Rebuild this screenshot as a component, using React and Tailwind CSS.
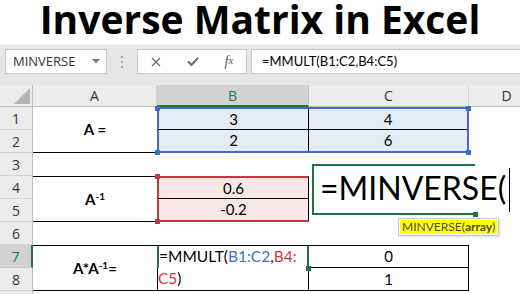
import React from "react";

const rows = [1, 2, 3, 4, 5, 6, 7, 8, 9];

function FormulaBar() {
  return (
    <div className="h-[40px] bg-[#e6e6e6] flex items-start pt-[4px] pl-[5px] overflow-hidden font-['Open_Sans',sans-serif]">
      <div className="w-[102px] h-[25px] shrink-0 bg-white border border-[#c6c6c6] flex items-center pl-[7px] pr-[6px] text-[13px] text-[#333]">
        <span className="flex-1">MINVERSE</span>
        <svg width="8" height="5" viewBox="0 0 8 5">
          <path d="M0 0h8L4 4.5z" fill="#7a7a7a" />
        </svg>
      </div>
      <div className="w-[30px] h-[25px] shrink-0 flex flex-col items-center justify-center gap-[3px]">
        <span className="w-[2px] h-[2px] bg-[#a6a6a6]" />
        <span className="w-[2px] h-[2px] bg-[#a6a6a6]" />
        <span className="w-[2px] h-[2px] bg-[#a6a6a6]" />
      </div>
      <div className="w-[110px] h-[25px] shrink-0 bg-white border border-[#c6c6c6] flex items-center">
        <span className="w-[36px] flex justify-center">
          <svg width="10" height="10" viewBox="0 0 10 10">
            <path d="M1 1l8 8M9 1l-8 8" stroke="#6b6b6b" strokeWidth="1.3" />
          </svg>
        </span>
        <span className="w-[38px] flex justify-center">
          <svg width="12" height="9" viewBox="0 0 12 9">
            <path d="M1 4.5l3.5 3.5L11 1" stroke="#6b6b6b" strokeWidth="2" fill="none" />
          </svg>
        </span>
        <span className="w-[34px] flex justify-center font-['Liberation_Serif',serif] italic text-[14px] text-[#555] leading-none">
          f<span className="text-[11px]">x</span>
        </span>
      </div>
      <div className="ml-[4px] w-[280px] shrink-0 h-[25px] bg-white border border-[#c6c6c6] pl-[10px] flex items-center font-['Lato',sans-serif] text-[13px] text-black">
        =MMULT(B1:C2,B4:C5)
      </div>
    </div>
  );
}

function RowHeads() {
  return (
    <div className="w-[33px] shrink-0 flex flex-col font-['Open_Sans',sans-serif] text-[14px] text-[#333]">
      <div className="relative h-[22px] shrink-0 bg-[#ececec] border-r border-b border-[#bdbdbd]">
        <svg className="absolute right-[2px] bottom-[2px]" width="16" height="16" viewBox="0 0 16 16">
          <path d="M16 0V16H0z" fill="#b5b5b5" />
        </svg>
      </div>
      {rows.map((n) =>
        n === 7 ? (
          <div
            key={n}
            className="h-[23px] shrink-0 bg-[#d2d2d2] border-b border-[#c6c6c6] border-r-2 border-r-[#217346] text-[#217346] flex items-center justify-center"
          >
            {n}
          </div>
        ) : (
          <div
            key={n}
            className="h-[23px] shrink-0 bg-[#ececec] border-b border-[#d4d4d4] border-r border-r-[#bdbdbd] flex items-center justify-center"
          >
            {n < 9 ? n : null}
          </div>
        )
      )}
    </div>
  );
}

function Sheet() {
  const head =
    "row-start-1 bg-[#ececec] border-r border-[#d4d4d4] border-b border-b-[#bdbdbd] flex items-center justify-center font-['Open_Sans',sans-serif] text-[14px] text-[#333]";
  const label = "flex items-center justify-center font-bold text-[15px]";
  const num = "flex items-center justify-center";

  return (
    <div className="relative flex h-[209px] font-['Lato',sans-serif] text-[15px] text-black">
      <RowHeads />
      <div className="grid shrink-0 grid-cols-[124px_152px_160px_76px] grid-rows-[22px_repeat(9,23px)]">
        <div className={`col-start-1 ${head}`}>A</div>
        <div className="col-start-2 row-start-1 bg-[#d2d2d2] border-r border-[#c6c6c6] border-b-2 border-b-[#217346] flex items-center justify-center font-['Open_Sans',sans-serif] text-[14px] text-[#217346]">
          B
        </div>
        <div className={`col-start-3 ${head}`}>C</div>
        <div className={`col-start-4 ${head}`}>D</div>

        <div className={`col-start-1 row-start-2 row-span-2 border-b border-black ${label}`}>A =</div>

        <div className="relative col-start-2 col-span-2 row-start-2 row-span-2 grid grid-cols-[150px_1fr] grid-rows-2 border-2 border-[#3e6fc2] bg-[#e4ecf7]">
          <div className={`border-r border-b border-black ${num}`}>3</div>
          <div className={`border-b border-black ${num}`}>4</div>
          <div className={`border-r border-black ${num}`}>2</div>
          <div className={num}>6</div>
          <span className="absolute -left-[4px] -top-[3px] w-[5px] h-[5px] bg-[#3e6fc2]" />
          <span className="absolute -left-[4px] -bottom-[4px] w-[5px] h-[5px] bg-[#3e6fc2]" />
          <span className="absolute -right-[4px] -top-[3px] w-[5px] h-[5px] bg-[#3e6fc2]" />
          <span className="absolute -right-[4px] -bottom-[4px] w-[5px] h-[5px] bg-[#3e6fc2]" />
        </div>

        <div className={`col-start-1 row-start-5 row-span-2 border-t border-b border-black ${label}`}>
          <span>
            A<sup className="text-[10px]">-1</sup>
          </span>
        </div>

        <div className="relative col-start-2 row-start-5 row-span-2 grid grid-rows-2 border-l-2 border-t-2 border-b-2 border-[#c5383e] border-r border-r-black bg-[#f9e7e7]">
          <div className={`border-b border-black ${num}`}>0.6</div>
          <div className={num}>-0.2</div>
          <span className="absolute -left-[4px] -top-[4px] w-[5px] h-[5px] bg-[#c5383e]" />
          <span className="absolute -left-[4px] -bottom-[4px] w-[5px] h-[5px] bg-[#c5383e]" />
        </div>

        <div className={`col-start-1 row-start-8 row-span-2 border-t border-b border-black ${label}`}>
          <span>
            A*A<sup className="text-[10px]">-1</sup>=
          </span>
        </div>

        <div className="relative col-start-2 row-start-8 border-t border-black border-l-2 border-l-[#217346] border-r-2 border-r-[#217346] flex items-center whitespace-nowrap text-[15.5px]">
          <span>
            =MMULT(<span className="text-[#3e6fc2]">B1:C2</span>,<span className="text-[#d0393f]">B4:</span>
          </span>
          <span className="absolute -right-[4px] -bottom-[3px] w-[5px] h-[5px] bg-[#217346]" />
        </div>
        <div className="col-start-2 row-start-9 border-l border-r border-b border-black flex items-center text-[15.5px]">
          <span className="text-[#d0393f]">C5</span>)
        </div>

        <div className={`col-start-3 row-start-8 border-t border-b border-r border-black ${num}`}>0</div>
        <div className={`col-start-3 row-start-9 border-b border-r border-black ${num}`}>1</div>
      </div>

      <div className="absolute left-[312px] top-[79px] w-[163px] h-[51px] bg-white border-l-2 border-t-2 border-b-2 border-[#217346] pl-[6px] pt-[6px] whitespace-nowrap text-[32px] leading-[32px]">
        <span className="relative">
          =MINVERSE(
          <span className="absolute -right-[4px] top-0 w-[1.5px] h-[44px] bg-black" />
        </span>
        <span className="absolute -right-[3px] -bottom-[4px] w-[5px] h-[5px] bg-[#217346]" />
      </div>

      <div className="absolute left-[398px] top-[133px] h-[18px] border border-[#c9c9c9] bg-white p-[1px] shadow-[1px_1px_2px_rgba(0,0,0,0.15)]">
        <div className="h-full bg-[#ffff00] px-[2px] flex items-center text-[12px] leading-none text-[#4a4a4a]">
          MINVERSE(<b>array</b>)
        </div>
      </div>
    </div>
  );
}

export default function App() {
  return (
    <div className="w-[520px] h-[294px] overflow-hidden bg-white">
      <h1 className="h-[45px] text-center font-['Open_Sans',sans-serif] font-bold text-[39px] leading-[38px] text-black">
        Inverse Matrix in Excel
      </h1>
      <FormulaBar />
      <Sheet />
    </div>
  );
}
